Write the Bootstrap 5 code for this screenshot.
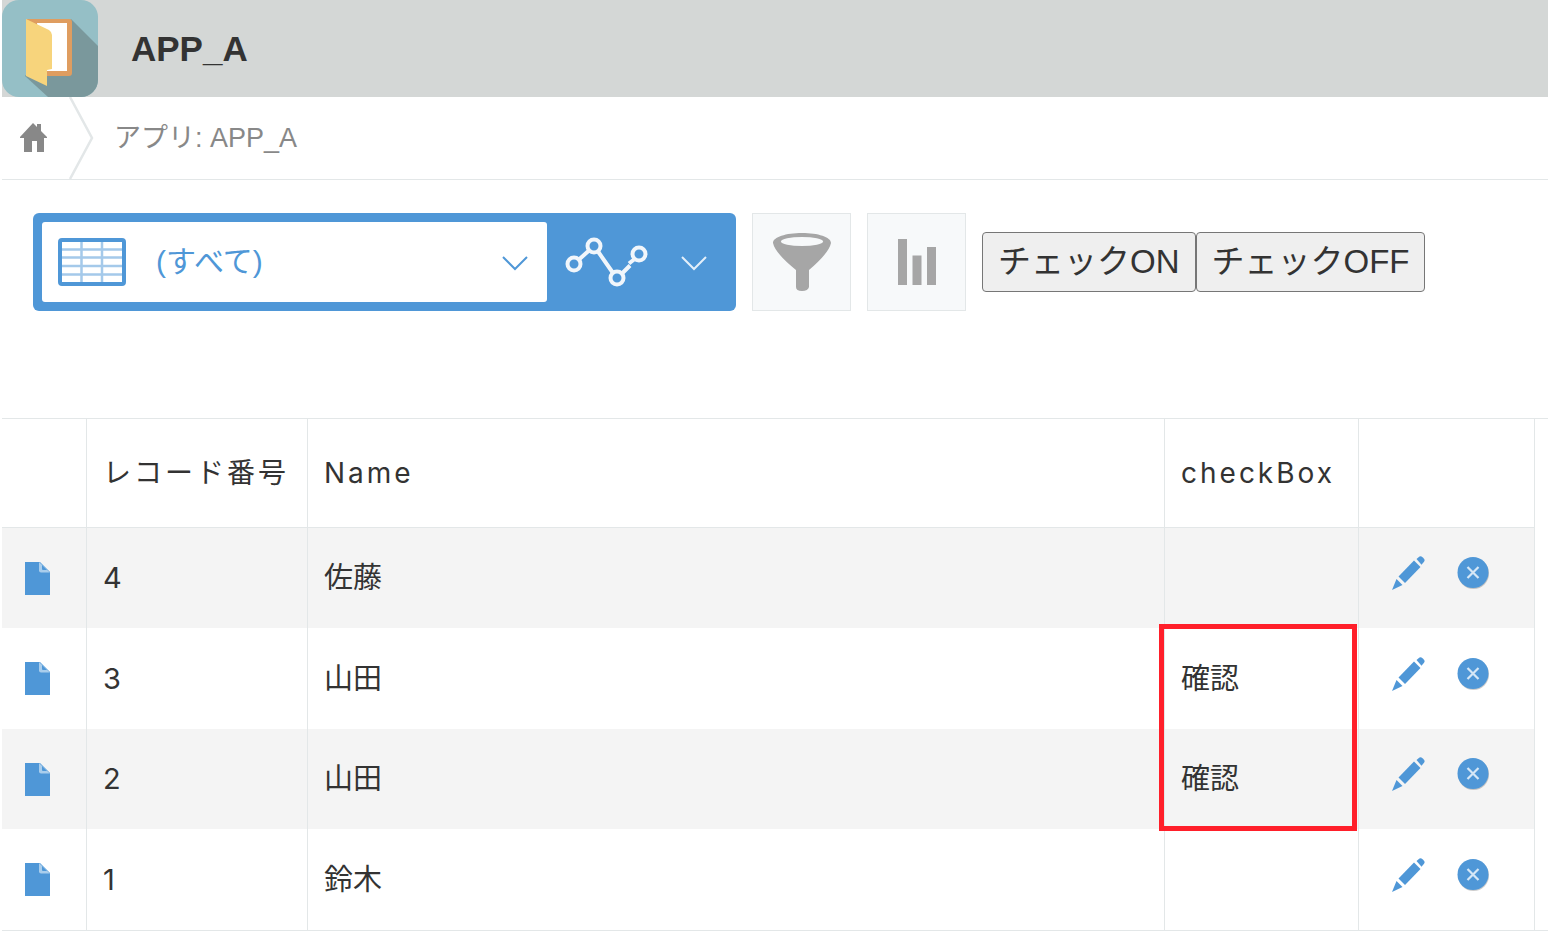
<!DOCTYPE html>
<html lang="ja">
<head>
<meta charset="utf-8">
<meta name="viewport" content="width=device-width, initial-scale=1">
<title>APP_A</title>
<link href="https://cdn.jsdelivr.net/npm/bootstrap@5.3.0/dist/css/bootstrap.min.css" rel="stylesheet">
<style>
  :root { --blue: #4f97d7; --line: #e3e7e8; }
  body { font-family: "Liberation Sans", "Noto Sans CJK JP", sans-serif; font-size: 28px; line-height: 40px; color: #333; background: #fff; padding-left: 2px; }
  svg { display: block; }
  .app-head { background: #d4d7d6; gap: 33px; }
  .app-head h1 { font-size: 35px; line-height: 48px; }
  .crumbs { height: 83px; border-bottom: 1px solid var(--line); }
  .crumbs a { color: #888; }
  .crumbs .here { color: #888; padding-left: 20px; font-size: 27px; line-height: 42px; }
  .home { padding-left: 17px; width: 67px; }
  .tools { padding: 33px 31px 0; gap: 16px; }
  .viewbar { background: var(--blue); border-radius: 6px; width: 703px; height: 98px; padding: 9px; }
  .viewpick { background: #fff; border-radius: 3px; width: 505px; height: 80px; padding: 0 18px 0 16px; color: var(--blue); }
  .viewpick select { appearance: none; border: 0; background: transparent; color: var(--blue); font-size: 30px; padding: 0 0 0 30px; height: 80px; outline-offset: -4px; }
  .graphpick { border: 0; background: transparent; padding: 0 19px 0 18px; color: #e4effa; }
  .sqbtn { width: 99px; height: 98px; background: #f7f9fa; border: 1px solid var(--line); }
  .plainbtn { font-size: 33px; line-height: 40px; height: 60px; padding: 0 15px; border: 1px solid #767676; border-radius: 4px; background: #efefef; color: #333; white-space: nowrap; }
  .records { margin-top: 107px; padding-right: 13px; border-top: 1px solid var(--line); border-bottom: 1px solid var(--line); }
  .records table { table-layout: fixed; width: 100%; border-collapse: separate; border-spacing: 0; }
  .records th, .records td { font-family: Inter, "Noto Sans CJK JP", sans-serif; border-right: 1px solid var(--line); padding: 0 16px; vertical-align: middle; }
  .records th { height: 109px; font-weight: 400; letter-spacing: 3px; border-bottom: 1px solid var(--line); white-space: nowrap; }
  .records td { height: 100px; font-size: 29px; }
  .records tbody tr:nth-child(even) td { height: 101px; }
  .records tbody tr:nth-child(odd) { background: #f4f4f4; }
  .records tbody td:first-child { padding-left: 23px; }
  .c-open { width: 85px; } .c-no { width: 221px; } .c-check { width: 194px; } .c-act { width: 176px; }
  .acts { gap: 31px; padding: 0 0 10px 16px; }
  .acts button { border: 0; background: transparent; padding: 0; }
  .callout { position: absolute; z-index: 1; top: -4px; left: -6px; right: 1px; height: calc(200% + 5px); border: 5px solid #ff1f2a; pointer-events: none; }
</style>
</head>
<body>
<svg class="d-none" aria-hidden="true">
  <symbol id="doc" viewBox="0 0 25 33"><path fill="#4f97d7" d="M0 0h15l10 10v23H0z"/><path fill="#a9cdec" d="M14 0l11 10.500H16q-2 0-2-2z"/><path fill="#4f97d7" d="M17 3l5 5h-4q-1 0-1-1z"/></symbol>
  <symbol id="pencil" viewBox="0 0 34 34"><g fill="#4f97d7"><path d="M25.500 3l3-2.500q1.500-.8 3 .7l1.500 1.500q1.200 1.500 0 3l-2.500 3z"/><path d="M23 4.500l6.500 6.500L14 27 7.500 20.500z"/><path d="M5.500 23l6 6L1 34z"/></g></symbol>
  <symbol id="remove" viewBox="0 0 34 34"><circle cx="17.500" cy="17.500" r="15.500" fill="#000" opacity=".2"/><circle cx="17" cy="16.500" r="15.500" fill="#4f97d7"/><path d="M11.500 11l11 11M22.500 11l-11 11" stroke="#d6e7f6" stroke-width="2.200"/></symbol>
  <symbol id="chev" viewBox="0 0 28 17"><path d="M2 3l12 12L26 3" fill="none" stroke="currentColor" stroke-width="2"/></symbol>
</svg>

<header class="app-head d-flex align-items-center">
  <svg width="96" height="97" viewBox="0 0 96 97" role="img" aria-label="APP_A">
    <defs><clipPath id="tile"><rect width="96" height="97" rx="17"/></clipPath></defs>
    <g clip-path="url(#tile)">
      <path fill="#95bfc6" d="M0 0h96v97H0z"/>
      <path fill="#7a989c" d="M69 19l27 27v51H46L23 76z"/>
    </g>
    <path fill="#df9d60" d="M24 19h43q3 0 3 3v51q0 3-3 3H40V30z"/>
    <path fill="#fff" d="M35 23h30v48H40z"/>
    <path fill="#f7d47c" d="M24 19l23 11q3 2 3 5v34l-5 1v16L24 76z"/>
  </svg>
  <h1 class="fw-bold mb-0">APP_A</h1>
</header>

<nav class="crumbs d-flex align-items-center" aria-label="breadcrumb">
  <a class="home" href="#" aria-label="Home"><svg width="28" height="30" viewBox="0 0 28 30"><path fill="#888" d="M14 0l4 4V1h4v7l6 6v1h-3v14h-7V18h-5v11H5V15H1v-1z"/></svg></a>
  <svg width="25" height="82" viewBox="0 0 25 82"><path d="M1 0l22 41L1 82" fill="none" stroke="#e3e7e8" stroke-width="2.500"/></svg>
  <a class="here text-decoration-none" href="#">アプリ: APP_A</a>
</nav>

<main>
  <div class="tools d-flex align-items-center">
    <div class="viewbar d-flex">
      <div class="viewpick d-flex align-items-center">
        <svg width="68" height="48" viewBox="0 0 68 48"><g stroke="#a4c9ea" stroke-width="2.500"><path d="M2 11.500h64M2 19.500h64M2 28h64M2 36.500h64"/><path d="M23.500 2v44M44 2v44"/></g><rect x="2" y="2" width="64" height="44" rx="2" fill="none" stroke="#4f97d7" stroke-width="4"/></svg>
        <select class="flex-grow-1" aria-label="一覧"><option>(すべて)</option></select>
        <svg width="28" height="17"><use href="#chev"/></svg>
      </div>
      <button type="button" class="graphpick d-flex flex-fill align-items-center justify-content-between" aria-label="グラフ">
        <svg width="84" height="50" viewBox="0 0 84 50"><g fill="none" stroke="#f1f6fb" stroke-width="4"><circle cx="9" cy="27" r="6.500"/><circle cx="29" cy="9" r="6.500"/><circle cx="52" cy="41" r="6.500"/><circle cx="74" cy="17" r="6.500"/><path d="M14 22.500l10-9M33 14.500L48 36M57 36.500l8-8M64 26.500l5-4"/></g></svg>
        <svg width="28" height="17"><use href="#chev"/></svg>
      </button>
    </div>
    <button type="button" class="sqbtn d-flex align-items-center justify-content-center p-0" aria-label="絞り込む">
      <svg width="58" height="58" viewBox="0 0 58 58"><path fill="#a6a6a6" d="M29 0C45 0 58 4 58 10Q56 20 36 37v17q-1 4-7 4t-6-4V37Q2 20 0 10C0 4 13 0 29 0z"/><ellipse cx="29" cy="8.500" rx="21" ry="4.500" fill="#f7f9fa"/></svg>
    </button>
    <button type="button" class="sqbtn d-flex align-items-center justify-content-center p-0" aria-label="集計する">
      <svg width="38" height="46" viewBox="0 0 38 46"><path fill="#a6a6a6" d="M0 0h9v46H0zM14.500 16.500h9V46h-9zM29 8h9v38h-9z"/></svg>
    </button>
    <div class="d-flex">
      <button type="button" class="plainbtn">チェックON</button>
      <button type="button" class="plainbtn">チェックOFF</button>
    </div>
  </div>

  <div class="records">
    <table>
      <colgroup><col class="c-open"><col class="c-no"><col><col class="c-check"><col class="c-act"></colgroup>
      <thead><tr><th></th><th>レコード番号</th><th>Name</th><th>checkBox</th><th></th></tr></thead>
      <tbody>
        <tr><td><a href="#" aria-label="詳細"><svg width="25" height="33"><use href="#doc"/></svg></a></td><td>4</td><td>佐藤</td><td></td>
          <td class="p-0"><div class="acts d-flex"><button type="button" aria-label="編集" class="ms-3"><svg width="34" height="34"><use href="#pencil"/></svg></button><button type="button" aria-label="削除"><svg width="34" height="34"><use href="#remove"/></svg></button></div></td></tr>
        <tr><td><a href="#" aria-label="詳細"><svg width="25" height="33"><use href="#doc"/></svg></a></td><td>3</td><td>山田</td><td class="position-relative">確認<div class="callout"></div></td>
          <td class="p-0"><div class="acts d-flex"><button type="button" aria-label="編集" class="ms-3"><svg width="34" height="34"><use href="#pencil"/></svg></button><button type="button" aria-label="削除"><svg width="34" height="34"><use href="#remove"/></svg></button></div></td></tr>
        <tr><td><a href="#" aria-label="詳細"><svg width="25" height="33"><use href="#doc"/></svg></a></td><td>2</td><td>山田</td><td>確認</td>
          <td class="p-0"><div class="acts d-flex"><button type="button" aria-label="編集" class="ms-3"><svg width="34" height="34"><use href="#pencil"/></svg></button><button type="button" aria-label="削除"><svg width="34" height="34"><use href="#remove"/></svg></button></div></td></tr>
        <tr><td><a href="#" aria-label="詳細"><svg width="25" height="33"><use href="#doc"/></svg></a></td><td>1</td><td>鈴木</td><td></td>
          <td class="p-0"><div class="acts d-flex"><button type="button" aria-label="編集" class="ms-3"><svg width="34" height="34"><use href="#pencil"/></svg></button><button type="button" aria-label="削除"><svg width="34" height="34"><use href="#remove"/></svg></button></div></td></tr>
      </tbody>
    </table>
  </div>
</main>
<script src="https://cdn.jsdelivr.net/npm/bootstrap@5.3.0/dist/js/bootstrap.bundle.min.js"></script>
</body>
</html>
